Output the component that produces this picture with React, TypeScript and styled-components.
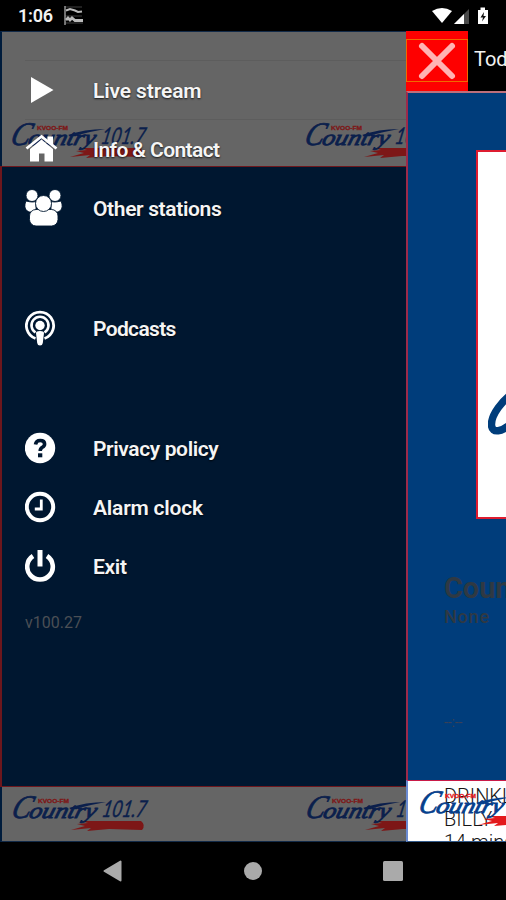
import React from 'react';
import styled, { createGlobalStyle, css } from 'styled-components';

const Global = createGlobalStyle`
  *, *::before, *::after { box-sizing: border-box; }
  body { margin: 0; background: #000; font-family: Roboto, sans-serif; }
  svg { display: block; flex: none; }
`;

const Phone = styled.div`
  display: grid;
  grid-template-rows: 31px 811px 58px;
  width: 506px;
  height: 900px;
  overflow: hidden;
  background: #000;
`;

const StatusBar = styled.header`
  display: flex;
  align-items: center;
  padding: 0 16px 0 18px;
  color: #f2f2f2;
`;

const Clock = styled.span`
  width: 46px;
  font-size: 18px;
  font-weight: 600;
  line-height: 31px;
  letter-spacing: -0.2px;
`;

const StatusIcons = styled.div`
  display: flex;
  align-items: center;
  margin: 0 -1px 0 auto;
`;

const Stage = styled.div`
  display: grid;
  grid-template-columns: 406px 100px;
  min-height: 0;
`;

const layer = css`
  grid-area: 1 / 1;
  min-width: 0;
  min-height: 0;
`;

const Drawer = styled.aside`
  display: grid;
  grid-template: 811px / 406px;
  overflow: hidden;
`;

const Backdrop = styled.div`
  ${layer}
  display: grid;
  grid-template-rows: 135px 621px 55px;
`;

const Band = styled.div<{ $top: number; $inset: number; $edge: 'top' | 'bottom' }>`
  display: flex;
  gap: 158px;
  overflow: hidden;
  padding: ${p => p.$top}px 0 0 ${p => p.$inset}px;
  background: #656565;
  border-left: 2px solid #001c3c;
  border-${p => p.$edge}: 1px solid #122a48;
`;

const BackdropBody = styled.div`
  background: #001730;
  border: solid #6d171d;
  border-width: 1px 0 1px 2px;
`;

const Menu = styled.nav`
  ${layer}
  padding-top: 29px;
`;

const MenuGroup = styled.div`
  & + & { margin-top: 61px; }
`;

const MenuRow = styled.a<{ $ruled?: boolean }>`
  display: grid;
  grid-template-columns: 68px 1fr;
  align-items: center;
  height: 59px;
  margin-left: 25px;
  color: #f5f5f5;
  border-top: 1px solid ${p => (p.$ruled ? '#5d5d5d' : 'transparent')};

  > svg { margin-top: -1px; }
`;

const MenuLabel = styled.span<{ $spacing: number }>`
  padding-top: 2px;
  font-size: 21px;
  font-weight: 600;
  line-height: 28px;
  white-space: nowrap;
  letter-spacing: ${p => p.$spacing}px;
  text-shadow: 0 1px 2px rgba(0, 0, 0, 0.8);
`;

const Version = styled.p`
  margin: 17px 0 0 25px;
  font-size: 16px;
  line-height: 22px;
  color: #4b4f55;
`;

const Player = styled.main`
  display: grid;
  grid-template-rows: 60px 689px 62px;
  min-width: 0;
  overflow: hidden;
`;

const PlayerHeader = styled.div`
  display: grid;
  grid-template-columns: 62px 1fr;
  overflow: hidden;
`;

const CloseButton = styled.button`
  display: flex;
  align-items: center;
  padding: 0;
  border: 0;
  background: #fe0000;
`;

const CloseFrame = styled.span`
  display: flex;
  align-items: center;
  justify-content: center;
  width: 62px;
  height: 43px;
  margin-top: -1px;
  border: 1px solid #f06a00;
`;

const PlayerTitle = styled.span`
  padding: 14px 0 0 6px;
  font-size: 20px;
  line-height: 28px;
  color: #f2f2f2;
  white-space: nowrap;
`;

const PlayerBody = styled.section`
  padding: 57px 0 0 68px;
  overflow: hidden;
  background: #003d7b;
  border-top: 2px solid #bd6f7b;
  border-left: 2px solid #9c2a4b;
`;

const Artwork = styled.div`
  display: flex;
  width: 368px;
  height: 369px;
  padding: 236px 0 0 10px;
  background: #fff;
  border: 2px solid #de1c30;
`;

const StationInfo = styled.div`
  margin: 52px 0 0 -32px;
  color: #2f3943;
  white-space: nowrap;
`;

const StationName = styled.h1`
  margin: 0;
  font-size: 29px;
  line-height: 34px;
  font-weight: 700;
  letter-spacing: -0.1px;
`;

const Subtitle = styled.p`
  margin: 0 0 86px;
  font-size: 18px;
  font-weight: 500;
  line-height: 24px;
  letter-spacing: 0.8px;
`;

const Placeholder = styled.p`
  margin: 0;
  font-size: 14px;
  line-height: 14px;
  letter-spacing: -0.1px;
  color: #3a4157;
`;

const NowBar = styled.div`
  display: grid;
  grid-template: 60px / 1fr;
  overflow: hidden;
  background: #fff;
  border-top: 1px solid #c91a48;
  border-left: 2px solid #6b8bd2;
  border-bottom: 1px solid #345b8b;
`;

const Tracks = styled.p`
  ${layer}
  margin: 4px 0 0 36px;
  font-size: 20px;
  font-weight: 300;
  line-height: 23px;
  color: #151515;
  white-space: pre;
`;

const NowLogo = styled.div`
  ${layer}
  padding: 9px 0 0 12px;
`;

const NavBar = styled.footer`
  display: grid;
  grid-template-columns: repeat(3, 140px);
  justify-content: center;
  align-items: center;
  justify-items: center;
`;

function StationLogo({ dim = false }: { dim?: boolean }) {
  const ink = dim ? '#0b1f4c' : '#063f8c';
  const red = dim ? '#7d1717' : '#e3191b';
  return (
    <svg width="136" height="38" viewBox="0 0 136 38" overflow="visible">
      <path d="M64 29 L75 28 L67 26 L128 26 Q133 30 129 35 L96 34 L74 36 L78 33 L58 35 L72 31Z" fill={red} />
      <g fill={ink} stroke={ink} fontStyle="italic">
        <text transform="translate(-3 23) skewX(-18)" fontFamily="Liberation Serif, serif" fontSize="33" textLength="19" lengthAdjust="spacingAndGlyphs" strokeWidth="0.8">C</text>
        <text transform="translate(15 22.5) skewX(-16)" fontFamily="Liberation Serif, serif" fontSize="22" textLength="67" lengthAdjust="spacingAndGlyphs" strokeWidth="0.9">ountry</text>
        <text transform="translate(88 22) skewX(-12)" fontFamily="Lato, sans-serif" fontSize="23" textLength="44" lengthAdjust="spacingAndGlyphs" strokeWidth="0.4">101.7</text>
      </g>
      <path d="M56 13 Q72 7 93 7 Q76 10 62 14Z" fill={ink} />
      <text x="25" y="8" fill={red} stroke={red} strokeWidth="0.3" fontFamily="Liberation Sans, sans-serif" fontWeight="700" fontSize="6" textLength="31" lengthAdjust="spacingAndGlyphs">KVOO-FM</text>
    </svg>
  );
}

const PlayIcon = () => (
  <svg width="38" height="38" viewBox="0 0 38 38"><path d="M6 6 L28.5 19 L6 32Z" fill="#fff" /></svg>
);

const HomeIcon = () => (
  <svg width="38" height="38" viewBox="0 0 38 38" fill="#fff">
    <path d="M5 19 L16.5 9.5 L28 19 V31.5 H19.5 V23.5 H14 V31.5 H5Z" />
    <path d="M1.5 18.5 L16.5 6.5 L31.5 18.5" fill="none" stroke="#fff" strokeWidth="2.8" />
    <path d="M22.5 6.5 h5.5 v10 l-5.5 -4Z" />
  </svg>
);

const PeopleIcon = () => (
  <svg width="38" height="38" viewBox="0 0 38 38" fill="#fff" stroke="#001730" strokeWidth="0.9">
    <circle cx="7" cy="6.5" r="6" />
    <circle cx="30" cy="6.5" r="6" />
    <path d="M1 12 Q9 14 11 12 V23 H4 Q-1 21 0 15Z" />
    <path d="M36 12 Q28 14 26 12 V23 H33 Q38 21 37 15Z" />
    <rect x="4.5" y="20.5" width="28.5" height="16.5" rx="6.5" />
    <circle cx="18.5" cy="14.5" r="8" />
  </svg>
);

const PodcastIcon = () => (
  <svg width="38" height="38" viewBox="0 0 38 38" fill="none" stroke="#fff">
    <path d="M10.5 29.5 A13.6 13.6 0 1 1 19.5 29.5" strokeWidth="2.8" />
    <path d="M10.5 23.5 A8.5 8.5 0 1 1 19.5 23.5" strokeWidth="2.6" />
    <circle cx="15" cy="16.5" r="4.7" fill="#fff" stroke="none" />
    <path d="M11 24 Q11 22 15 22 Q19 22 19 24 L17.8 34 Q17.5 36.5 15 36.5 Q12.5 36.5 12.2 34Z" fill="#fff" stroke="none" />
  </svg>
);

const HelpIcon = () => (
  <svg width="38" height="38" viewBox="0 0 38 38">
    <circle cx="15" cy="19" r="15.2" fill="#fff" />
    <path d="M10.5 15.5 Q11 11.5 15.2 11.5 Q19.6 11.5 19.6 15 Q19.6 17 17.3 18.3 Q15.2 19.4 15.2 22" fill="none" stroke="#001730" strokeWidth="3.6" />
    <rect x="13" y="24.3" width="4.3" height="4" fill="#001730" />
  </svg>
);

const ClockIcon = () => (
  <svg width="38" height="38" viewBox="0 0 38 38" fill="none" stroke="#fff">
    <circle cx="15" cy="19" r="13.2" strokeWidth="4" />
    <path d="M16.3 11.5 V21 H9.8" strokeWidth="2.8" />
  </svg>
);

const PowerIcon = () => (
  <svg width="38" height="38" viewBox="0 0 38 38" fill="none" stroke="#fff">
    <path d="M8 9 A12.8 12.8 0 1 0 22 9" strokeWidth="4.6" />
    <path d="M15 3 V19.5" strokeWidth="5" />
  </svg>
);

const FlagIcon = () => (
  <svg width="20" height="20" viewBox="0 0 20 20" fill="none" stroke="#bbb">
    <path d="M1 0 V19" strokeWidth="1.2" />
    <path d="M1 1 H18 M1 10 H18 M1 17 H19" strokeWidth="0.7" opacity="0.5" />
    <path d="M2 4.5 L6 3 L11 4.5 L14 6 L18 5.5" strokeWidth="2" />
    <path d="M2 14 L4 12 L6 14 L8 12 L11 14.5 L19 14.5" strokeWidth="2.8" />
  </svg>
);

const SignalIcons = () => (
  <svg width="60" height="20" viewBox="0 0 60 20">
    <path d="M1 5 Q11 -1 21 5 L11 17Z" fill="#fff" />
    <path d="M38 3 V18 H23Z" fill="#4a4a4a" />
    <path d="M33 8 V18 H23Z" fill="#fff" />
    <path d="M47 4 H49.5 V1.5 H54 V4 H57 V18 H47Z" fill="#fff" />
    <path d="M53 6 L49.5 11.5 H52 L51 15.5 L55 10 H52.5Z" fill="#111" />
  </svg>
);

interface Item { label: string; icon: React.FC; spacing: number; ruled?: boolean }

const groups: Item[][] = [
  [
    { label: 'Live stream', icon: PlayIcon, spacing: -0.12, ruled: true },
    { label: 'Info & Contact', icon: HomeIcon, spacing: -0.6, ruled: true },
    { label: 'Other stations', icon: PeopleIcon, spacing: -0.36 },
  ],
  [{ label: 'Podcasts', icon: PodcastIcon, spacing: -0.65 }],
  [
    { label: 'Privacy policy', icon: HelpIcon, spacing: -0.38 },
    { label: 'Alarm clock', icon: ClockIcon, spacing: -0.2 },
    { label: 'Exit', icon: PowerIcon, spacing: -0.3 },
  ],
];

export default function App() {
  return (
    <>
      <Global />
      <Phone>
        <StatusBar>
          <Clock>1:06</Clock>
          <FlagIcon />
          <StatusIcons><SignalIcons /></StatusIcons>
        </StatusBar>
        <Stage>
          <Drawer>
            <Backdrop>
              <Band $top={90} $inset={10} $edge="top"><StationLogo dim /><StationLogo dim /></Band>
              <BackdropBody />
              <Band $top={8} $inset={11} $edge="bottom"><StationLogo dim /><StationLogo dim /></Band>
            </Backdrop>
            <Menu>
              {groups.map((items, i) => (
                <MenuGroup key={i}>
                  {items.map(({ label, icon: Icon, spacing, ruled }) => (
                    <MenuRow key={label} $ruled={ruled}>
                      <Icon />
                      <MenuLabel $spacing={spacing}>{label}</MenuLabel>
                    </MenuRow>
                  ))}
                </MenuGroup>
              ))}
              <Version>v100.27</Version>
            </Menu>
          </Drawer>
          <Player>
            <PlayerHeader>
              <CloseButton aria-label="Close">
                <CloseFrame>
                  <svg width="40" height="40" viewBox="0 0 40 40">
                    <path d="M5 5 L35 35 M35 5 L5 35" stroke="#ffb3b3" strokeWidth="6" strokeLinecap="round" />
                  </svg>
                </CloseFrame>
              </CloseButton>
              <PlayerTitle>Today</PlayerTitle>
            </PlayerHeader>
            <PlayerBody>
              <Artwork>
                <svg width="60" height="50" viewBox="0 0 60 50">
                  <path d="M28 3 C14 12 3 27 3.5 37 C4 46 14 44 24 35" fill="none" stroke="#003d7b" strokeWidth="7.5" />
                </svg>
              </Artwork>
              <StationInfo>
                <StationName>Country</StationName>
                <Subtitle>None</Subtitle>
                <Placeholder>--:--</Placeholder>
              </StationInfo>
            </PlayerBody>
            <NowBar>
              <Tracks>{'DRINKL\nBILLY\n14 mins'}</Tracks>
              <NowLogo><StationLogo /></NowLogo>
            </NowBar>
          </Player>
        </Stage>
        <NavBar>
          <svg width="20" height="22" viewBox="0 0 20 22"><path d="M1.5 11 L17.5 1.5 V20.5Z" fill="#aaa" stroke="#aaa" strokeWidth="2" strokeLinejoin="round" /></svg>
          <svg width="18" height="18" viewBox="0 0 18 18"><circle cx="9" cy="9" r="9" fill="#aaa" /></svg>
          <svg width="20" height="20" viewBox="0 0 20 20"><rect width="20" height="20" rx="1.5" fill="#aaa" /></svg>
        </NavBar>
      </Phone>
    </>
  );
}
